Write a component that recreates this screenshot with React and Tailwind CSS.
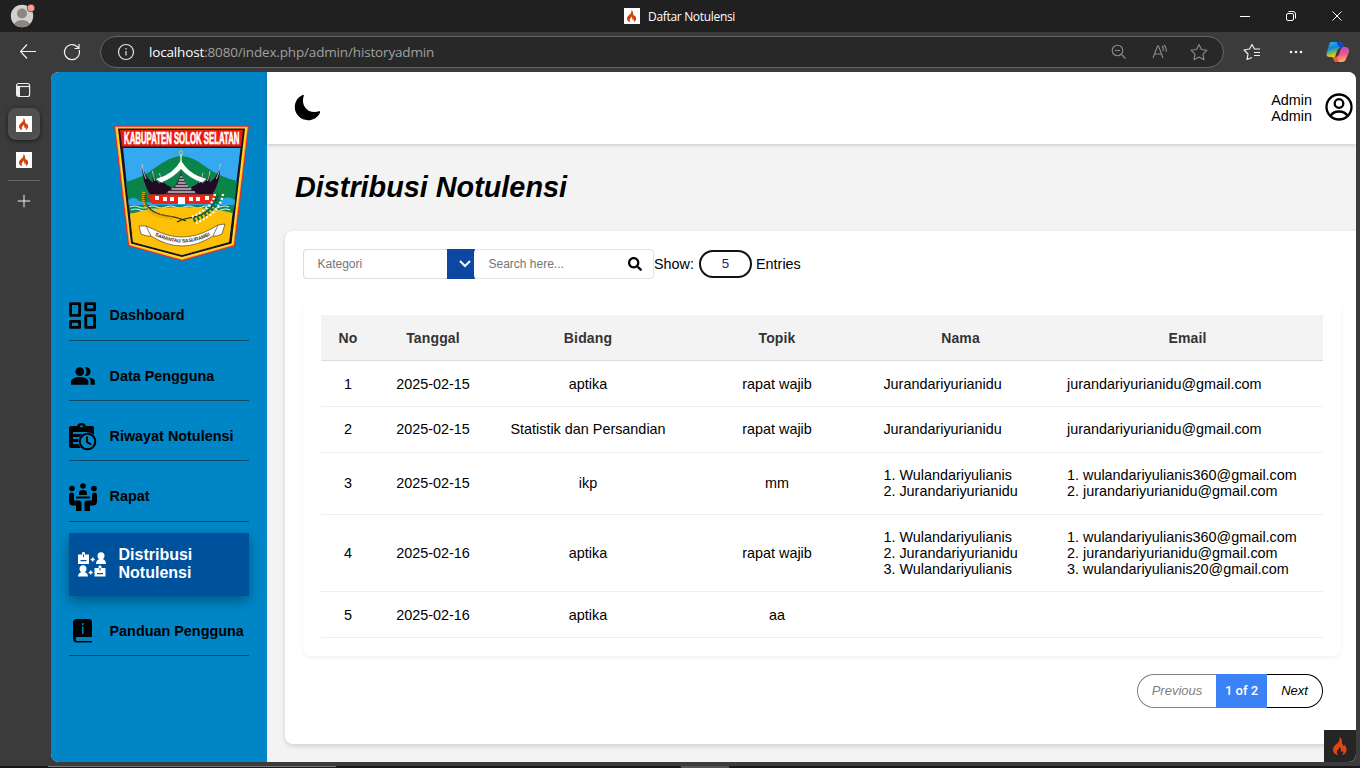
import { MdPeopleAlt } from "react-icons/md";
import { FaSearch } from "react-icons/fa";
import { IoMoon } from "react-icons/io5";
import { Plus } from "lucide-react";

function Flame({ height }) {
  return (
    <svg className="shrink-0" width={(height * 14) / 19} height={height} viewBox="0 0 14 19" fill="currentColor">
      <path d="M6.500 0C10 2 9 5 9.500 7L11 9.500L12 8C13 10 14 11 14 13C14 16 12 18 9 18.700C11 17 11 15 9.800 14.500C9 15.500 8 15 8 14C8.500 12 7.500 11 6.300 10C7 12.500 4 13 4 15.500C4 17 5 18 5.500 18.700C2 18 0 16 0 13C0 10 2 9 4 7C6.500 5 7 3 6.500 0Z" />
    </svg>
  );
}

function Horns() {
  return (
    <>
      <path d="M28 40Q32 56 43 59L47 69.500H36Q28 57 28 40ZM38.500 47Q41 58 50 61L52 69.500H43Q38 59 38.500 47ZM45.500 49Q49 60 57 62L56 69.500H49Q45 60 45.500 49Z" fill="#210b24" />
      <path d="M28 39Q29 48 32 54M38.500 46Q39 52 41 56M45.500 48Q46 54 49 58" fill="none" stroke="#e7e0e7" strokeWidth="0.800" />
    </>
  );
}

function Crest() {
  return (
    <svg width="136" height="138" viewBox="0 0 136 138" className="overflow-visible">
      <path d="M0 1H135L121 121L68 136L14 121Z" fill="#e8291c" />
      <path d="M1.500 2H133.500L119.500 120L68 134.500L15.500 120Z" fill="#ffd91a" stroke="#f0b080" strokeWidth="0.600" />
      <path d="M4 3.500H131L117.500 118.500L68 132L17 118.500Z" fill="#1d1020" />
      <path d="M6 5H129L127 21.500H8Z" fill="#e91d0f" />
      <path d="M9 23H126.500L115 117L68 130L19 117Z" fill="#35a9f0" />
      <path d="M12 57Q30 52 42 42Q58 31 67 31Q78 31 92 42Q106 52 123 56L120 82H15Z" fill="#0a8449" />
      <path d="M14.500 75Q20 70 25 76Q50 80 105 78Q111 69 121 75L120 83H15Z" fill="#2ba3e7" />
      <path d="M15 80H120.500L119 88H16Z" fill="#14845b" />
      <path d="M16 82q5 -2 9 0t9 0t9 0t9 0t9 0t9 0t9 0t9 0t9 0t9 0t9 0M17 85q5 -2 9 0t9 0t9 0t9 0t9 0t9 0t9 0t9 0t9 0t9 0t9 0" fill="none" stroke="#d9efdf" strokeWidth="1.200" />
      <path d="M16 89Q40 82 68 82Q100 83 118.500 88L115 117L68 130L19 117Z" fill="#fdc007" />
      <Horns />
      <g transform="translate(134.400 0) scale(-1 1)"><Horns /></g>
      <path d="M42 54Q60 49 67 35Q74 49 92.500 54L88 57.500Q75 53 67 44Q59 53 47 57.500Z" fill="#fff" />
      <path d="M67 46Q64 61 53 67L49 70.500H86L81 67Q70 61 67 46Z" fill="#443046" />
      <path d="M66 52H68.500M65 55H70M64 58H71.500M61.500 61H74M58 64H77M54 67H81" stroke="#fff" strokeWidth="1" />
      <path d="M33 69.500H102L97 79H38Z" fill="#ee2414" />
      <path d="M41 71h4v4h-4zM49 72h4v4h-4zM56 72h4v4h-4zM75 72h4v4h-4zM82 72h4v4h-4zM91 71h4v4h-4zM64 72h7v7h-7z" fill="#fff" />
      <path d="M67 29V38" stroke="#fff" strokeWidth="1.200" />
      <circle cx="67" cy="27.500" r="1.800" fill="none" stroke="#d6cc20" strokeWidth="1" />
      <path d="M31 69Q28 89 60 92Q68 94 72 96M104 70Q98 90 75 93Q68 94 63 97" fill="none" stroke="#17251f" strokeWidth="1.200" />
      <path d="M30 67Q27 80 38 88Q47 92 58 93" fill="none" stroke="#d9a012" strokeWidth="3.500" strokeDasharray="1 1" />
      <path d="M105 69Q101 87 78 95" fill="none" stroke="#117644" strokeWidth="6" strokeDasharray="2 2" />
      <path d="M109 69Q106 88 82 98M101 69Q98 84 77 92" fill="none" stroke="#f5faf0" strokeWidth="2.400" strokeDasharray="2 2" />
      <path d="M25 101L32 101L39 104Q68 120 97 104L104 100L111 99L108 109L103 111L99 111Q68 131 37 111L33 111L27 109Z" fill="#fff" stroke="#574323" strokeWidth="0.700" />
      <path d="M32 101L37 111M104 100L99 111" stroke="#574323" strokeWidth="0.700" />
      <path id="crest-ribbon" d="M38 109Q68.500 126 99 109" fill="none" />
      <text fontFamily="Liberation Sans" fontSize="5" letterSpacing="-0.100" fontWeight="bold" fill="#332b1d">
        <textPath href="#crest-ribbon" startOffset="50%" textAnchor="middle">SARANTAU SASURAMBI</textPath>
      </text>
      <g transform="translate(10 18.500) scale(0.555 1)">
        <text textLength="208" lengthAdjust="spacingAndGlyphs" fontFamily="Liberation Sans" fontSize="16" fontWeight="bold" fill="#fff" stroke="#fff" strokeWidth="0.700">KABUPATEN SOLOK SELATAN</text>
      </g>
    </svg>
  );
}

function DashboardIcon() {
  return (
    <svg width="28" height="28" viewBox="0 0 28 28" fill="none" stroke="black" strokeWidth="2.800">
      <path d="M1.600 1.600H10.600V13.400H1.600ZM16.800 1.600H25.600V7.800H16.800ZM16.800 13.600H25.600V25.400H16.800ZM1.600 19.400H10.600V25.400H1.600Z" strokeLinejoin="round" />
    </svg>
  );
}

function HistoryIcon() {
  return (
    <svg width="28" height="28" viewBox="0 0 28 28">
      <path fillRule="evenodd" d="M2 3H8Q9 0 12.500 0T17 3H23Q25 3 25 5V13Q22 11 18 11V9H4V11H14L12 14H4V16H11L10 19H4V21H10Q11 24 13 25H2Q0 25 0 23V5Q0 3 2 3ZM12.500 2A1.300 1.300 0 1 0 12.600 2Z" />
      <circle cx="18.500" cy="18.500" r="9.300" className="fill-[#0086c7]" />
      <circle cx="18.500" cy="18.500" r="7.800" fill="none" stroke="black" strokeWidth="2" />
      <path d="M18 13.500V19L22 21.500" fill="none" stroke="black" strokeWidth="2" />
    </svg>
  );
}

function MeetingIcon() {
  return (
    <svg width="28" height="28" viewBox="0 0 28 28">
      <circle cx="14" cy="3" r="2.800" />
      <circle cx="3" cy="5.500" r="2.800" />
      <circle cx="25" cy="5.500" r="2.800" />
      <path d="M10 12V10Q10 7 14 7T18 10V12ZM7 13.500H21V15.500H7ZM0 12Q0 9.500 2.500 9.500T5 12V17.500H9.500Q12.500 17.500 12.500 20.500V28H7V22.500H4Q0 22.500 0 18ZM28 12Q28 9.500 25.500 9.500T23 12V17.500H18.500Q15.500 17.500 15.500 20.500V28H21V22.500H24Q28 22.500 28 18Z" />
    </svg>
  );
}

function DistributionIcon() {
  return (
    <svg width="28" height="26" viewBox="0 0 28 26" fill="currentColor">
      <path fillRule="evenodd" d="M0 2.500H4V1Q4 0 5.500 0T7 1V2.500H11V12H0ZM5 2.500V5H6V2.500ZM2.500 8H8.500V9.300H2.500Z" />
      <path fillRule="evenodd" transform="translate(16.500 13.500)" d="M0 2.500H4V1Q4 0 5.500 0T7 1V2.500H11V11H0ZM5 2.500V5H6V2.500ZM2.500 7.500H8.500V8.800H2.500Z" />
      <path d="M14.700 5.500V9.500M12.700 7.500H16.700M12.700 18.500V22.500M10.700 20.500H14.700" stroke="currentColor" strokeWidth="1.500" />
      <circle cx="23" cy="3.700" r="3.500" />
      <path d="M21.500 5H24.500V7Q28 8 28 12H18Q18 8 21.500 7Z" />
      <circle cx="5" cy="16.700" r="3.500" />
      <path d="M3.500 18H6.500V20Q10 21 10 24.500H0Q0 21 3.500 20Z" />
    </svg>
  );
}

function GuideIcon() {
  return (
    <svg width="20" height="24" viewBox="0 0 20 24">
      <path fillRule="evenodd" d="M4 0H16Q19 0 19 3V17Q19 18 18 18H4Q2.500 18 2.500 20T4 22H19V23.500H4Q0 23.500 0 19.500V4Q0 0 4 0ZM9 4V6H10.500V4ZM9 7.500V15H10.500V7.500Z" />
    </svg>
  );
}

const menu = [
  { label: "Dashboard", icon: <DashboardIcon />, cls: "h-[52px] pt-px" },
  { label: "Data Pengguna", icon: <MdPeopleAlt size={26} className="mb-[2px]" />, cls: "h-[60px] pt-[11px]" },
  { label: "Riwayat Notulensi", icon: <HistoryIcon />, cls: "h-[60px] pt-[11px]" },
  { label: "Rapat", icon: <MeetingIcon />, cls: "h-[61px] pt-[10px]" },
];

const Item = ({ label, icon, cls }) => (
  <div className={"flex items-center border-b border-[#084766] " + cls}>
    <span className="flex w-7 shrink-0 justify-center pt-px">{icon}</span>
    <span className="ml-[12.500px] text-[14.400px] leading-4 font-bold whitespace-nowrap">{label}</span>
  </div>
);

const W = "Wulandariyulianis";
const J = "Jurandariyurianidu";
const rows = [
  ["1", "2025-02-15", "aptika", "rapat wajib", [J], ["jurandariyurianidu@gmail.com"], "h-[46px]"],
  ["2", "2025-02-15", "Statistik dan Persandian", "rapat wajib", [J], ["jurandariyurianidu@gmail.com"], "h-[46px] pb-px"],
  ["3", "2025-02-15", "ikp", "mm", ["1. " + W, "2. " + J], ["1. wulandariyulianis360@gmail.com", "2. jurandariyurianidu@gmail.com"], "h-[62px] pb-px"],
  ["4", "2025-02-16", "aptika", "rapat wajib", ["1. " + W, "2. " + J, "3. " + W], ["1. wulandariyulianis360@gmail.com", "2. jurandariyurianidu@gmail.com", "3. wulandariyulianis20@gmail.com"], "h-[77px]"],
  ["5", "2025-02-16", "aptika", "aa", [], [], "h-[46px]"],
];
const grid = "grid grid-cols-[54px_116px_194px_184px_183px_271px] items-center border-b";

function TitleBar() {
  return (
    <header className="flex h-8 shrink-0 items-center bg-[#202020] text-white">
      <div className="flex w-[624px] pl-[10px]">
        <svg width="26" height="26" viewBox="0 0 26 26">
          <clipPath id="avatar"><circle cx="12" cy="13" r="11.200" /></clipPath>
          <g clipPath="url(#avatar)">
            <rect width="26" height="26" fill="#d3d0cd" />
            <circle cx="12" cy="10.500" r="5" fill="#8b8783" />
            <ellipse cx="12" cy="22.500" rx="8" ry="5.500" fill="#8b8783" />
          </g>
          <circle cx="21" cy="5" r="3.800" fill="#ff9a94" stroke="#202020" strokeWidth="0.600" />
        </svg>
      </div>
      <Favicon />
      <span className="ml-2 w-[592px] pt-px font-['Open_Sans'] text-[12px] tracking-[-0.320px]">Daftar Notulensi</span>
      <svg width="104" height="16" viewBox="0 0 104 16" fill="none" stroke="white" strokeWidth="1">
        <path d="M0 8.500H10" />
        <rect x="46.500" y="5.500" width="7" height="7" rx="1.500" />
        <path d="M48.500 3.500H53Q55.500 3.500 55.500 6V10.500M92.500 3.500L101.500 12.500M101.500 3.500L92.500 12.500" />
      </svg>
    </header>
  );
}

function Favicon() {
  return (
    <span className="flex size-4 shrink-0 items-center justify-center bg-white text-[#cc4410]">
      <Flame height={12.5} />
    </span>
  );
}

function AddressBar() {
  return (
    <div className="flex h-10 shrink-0 items-center bg-[#3b3b3b] text-[#f1f1f1]">
      <svg className="ml-5 shrink-0" width="80" height="20" viewBox="0 0 80 20" fill="none" stroke="currentColor" strokeWidth="1.200">
        <path d="M16 9.500H0.500M7 2.500L0.500 9.500L7 16.500" />
        <path d="M59.200 8A7.500 7.500 0 1 1 57 4.500L59 6.500M59 2V6.500H54.500" />
      </svg>
      <div className="flex h-8 w-[1124px] shrink-0 items-center rounded-full border border-[#666] bg-[#282828] pl-4">
        <svg className="shrink-0" width="18" height="18" viewBox="0 0 18 18" fill="none" stroke="#e4e4e4" strokeWidth="1.200">
          <circle cx="9" cy="9" r="7.500" /><path d="M9 8V12.500M9 5V6.500" />
        </svg>
        <span className="ml-[14px] w-[962px] shrink-0 pt-px font-['Open_Sans'] text-[13.500px] tracking-[-0.160px] text-[#a0a0a0]"><span className="text-white">localhost</span>:8080/index.php/admin/historyadmin</span>
        <svg className="shrink-0" width="98" height="20" viewBox="0 0 98 20" fill="none" stroke="#8c8c8c" strokeWidth="1.100">
          <circle cx="6.500" cy="8.500" r="5.300" /><path d="M4 8.500H9M10.500 12.500L14.500 16.500M42 16L46.500 4H47.500L52 16M43.500 12H50.500M51 4Q53 6 52 9M53 3Q56 6 55 10" />
          <path d="M88 2.500L90.400 7.500L96 8.200L92 12.100L93 17.700L88 15L83 17.700L84 12.100L80 8.200L85.600 7.500Z" strokeLinejoin="round" />
        </svg>
      </div>
      <svg className="ml-[19px] shrink-0" width="117" height="24" viewBox="0 0 117 24" fill="none" stroke="currentColor" strokeWidth="1.200">
        <path d="M9 17.500L4 19.500L5 14L1 10L6.500 9L9 4.500L11.500 9H17M11 12.500H17M11 15.500H17" strokeLinejoin="round" />
        <g fill="currentColor" stroke="none"><circle cx="48" cy="12" r="1.300" /><circle cx="53" cy="12" r="1.300" /><circle cx="58" cy="12" r="1.300" /></g>
        <defs>
          <linearGradient id="cool" x2="0.300" y2="1"><stop stopColor="#28b8f5" /><stop offset=".45" stopColor="#1582dc" /><stop offset=".7" stopColor="#65b764" /><stop offset="1" stopColor="#f5c728" /></linearGradient>
          <linearGradient id="warm" x2="0.200" y2="1"><stop stopColor="#9853ee" /><stop offset=".55" stopColor="#f05286" /><stop offset="1" stopColor="#ffab62" /></linearGradient>
        </defs>
        <g stroke="none" transform="translate(-1 0)">
          <path d="M89 2H97Q100 2 101 5L102 8H98Q96 8 95 11L93 17H88Q83 17 85 12L87 5Q87.500 2 89 2Z" fill="url(#cool)" />
          <path d="M95 2H98Q100 2 101 5L102 8H98L95 4Z" fill="#1747c7" />
          <path d="M102 7H104Q108 8 107 12L104 19Q103 22 100 22H95Q92 22 91 17H94Q96 17 97 14L99 9Q100 7 102 7Z" fill="url(#warm)" />
          <path d="M89 17H95L97 22H95Q92 22 91 18Z" fill="#f45934" />
        </g>
      </svg>
    </div>
  );
}

export default function App() {
  return (
    <div className="flex h-[768px] w-[1360px] flex-col overflow-hidden bg-[#3b3b3b] font-['Liberation_Sans',sans-serif] text-black">
      <TitleBar />
      <AddressBar />
      <div className="flex h-[690px] shrink-0">
        <aside className="flex w-[51px] shrink-0 flex-col items-center pr-[3px] text-white">
          <svg className="mt-[10px]" width="16" height="16" viewBox="0 0 16 16" fill="none" stroke="#eee" strokeWidth="1.200">
            <rect x="0.600" y="1.500" width="13" height="13" rx="2" /><path d="M1 4.500H14" /><path d="M2.500 4.500V14" strokeWidth="3" />
          </svg>
          <span className="mt-[10px] flex size-8 items-center justify-center rounded-lg bg-[#505050] shadow-[0_1px_4px_#1b1b1b]"><Favicon /></span>
          <span className="mt-3"><Favicon /></span>
          <span className="mt-3 h-px w-8 bg-[#666]" />
          <Plus className="mt-[10px] -ml-px" size={20} strokeWidth={1.100} />
        </aside>
        <div className="flex w-[1305px] overflow-hidden rounded-lg bg-[#f3f3f3]">
          <nav className="flex w-[216px] shrink-0 flex-col bg-[#0086c7] px-[18px] pt-[53px]">
            <div className="ml-[45px] w-[136px]"><Crest /></div>
            <div className="mt-[26px] flex flex-col">
              {menu.map((m) => <Item key={m.label} {...m} />)}
            </div>
            <div className="mt-[11px] flex h-[63px] shrink-0 items-center bg-[#00519b] pl-[9px] text-white shadow-[0_5px_12px_rgba(0,0,0,0.350)]">
              <DistributionIcon />
              <span className="ml-[12.500px] pb-px text-[16px] leading-[18px] font-bold">Distribusi<br />Notulensi</span>
            </div>
            <Item label="Panduan Pengguna" icon={<GuideIcon />} cls="h-[60px] pt-[10px] shrink-0" />
          </nav>
          <main className="flex w-[1089px] flex-col">
            <div className="flex h-[72px] shrink-0 items-center justify-between bg-white pr-[3px] pl-[26px] shadow-[0_1px_4px_rgba(0,0,0,0.200)]">
              <IoMoon size={29} className="mb-px" />
              <div className="flex items-center">
                <span className="text-[14.400px] leading-4">Admin<br />Admin</span>
                <svg className="mb-[2px] ml-[13px]" width="28" height="28" viewBox="0 0 28 28" fill="none" stroke="black" strokeWidth="2.300">
                  <circle cx="14" cy="14" r="12.500" /><circle cx="14" cy="10.500" r="4.300" /><path d="M5.500 23Q8 18.500 14 18.500T22.500 23" />
                </svg>
              </div>
            </div>
            <h1 className="mt-[25px] ml-[28px] h-9 text-[28.800px] leading-9 font-bold italic">Distribusi Notulensi</h1>
            <section className="mt-[26px] ml-[18px] flex h-[513px] w-[1080px] shrink-0 flex-col rounded-lg bg-white pt-[18px] pl-[18px] shadow-[0_2px_5px_rgba(0,0,0,0.150)]">
              <div className="flex h-[30px] items-center text-[14.400px]">
                <div className="flex h-[30px] w-[144px] items-center rounded-l border border-r-0 border-[#ddd] pl-[13.500px] text-[12px] text-[#757575]">Kategori</div>
                <div className="flex h-[30px] w-[28px] items-center justify-end bg-[#0d47a1] pr-1">
                  <svg width="12" height="8" viewBox="0 0 12 8" fill="none" stroke="white" strokeWidth="2"><path d="M1 1L6 6L11 1" /></svg>
                </div>
                <div className="-ml-px flex h-[30px] w-[180px] items-center justify-between rounded border border-l-0 border-[#e3e3e3] bg-white pr-[11px] pl-[14.500px] text-[12px] text-[#757575]">Search here...<FaSearch size={14} color="black" /></div>
                <span className="pt-[2px]">Show:</span>
                <span className="ml-[5px] flex h-7 w-[53px] items-center justify-center rounded-full border-2 border-[#111] pb-px text-[13.330px] text-[#222266]">5</span>
                <span className="ml-1 pt-[2px]">Entries</span>
              </div>
              <div className="mt-[18px] flex h-[359px] w-[1038px] flex-col rounded-lg px-[18px] pt-[18px] shadow-[0_2px_4px_rgba(0,0,0,0.050)]">
                <div className={grid + " h-[46px] border-[#ddd] bg-[#f3f3f3] text-center text-[14px] leading-4 font-bold tracking-[0.150px] text-[#333]"}>
                  {["No", "Tanggal", "Bidang", "Topik", "Nama", "Email"].map((h) => <span key={h}>{h}</span>)}
                </div>
                {rows.map((r) => (
                  <div key={r[0]} className={grid + " border-[#eee] text-center text-[14.400px] leading-4 " + r[6]}>
                    {r.slice(0, 4).map((c, i) => <span key={i}>{c}</span>)}
                    <span className="pl-[14.400px] text-left">{r[4].map((t, i) => <div key={i}>{t}</div>)}</span>
                    <span className="pl-[15px] text-left">{r[5].map((t) => <div key={t}>{t}</div>)}</span>
                  </div>
                ))}
              </div>
              <div className="mt-[18px] mr-[42px] flex h-[34px] w-[186px] self-end text-[13px]">
                <span className="flex w-[79px] items-center justify-center rounded-l-full border border-r-0 border-[#808080] text-[#808080] italic">Previous</span>
                <span className="flex w-[51px] items-center justify-center bg-[#3b82f6] font-[Roboto] text-[13px] font-medium text-white">1 of 2</span>
                <span className="flex w-[56px] items-center justify-center rounded-r-full border border-l-0 border-black italic">Next</span>
              </div>
            </section>
          </main>
          <div className="absolute top-[730px] left-[1324px] flex size-8 items-center justify-center rounded-br-lg bg-[#252525] text-[#dd4814]"><Flame height={18.5} /></div>
        </div>
      </div>
      <div className="mt-auto flex h-[2px] bg-[#181818]">
        <div className="ml-12 h-px w-72 bg-[#777]" />
        <div className="ml-[345px] h-[2px] w-12 bg-[#555]" />
      </div>
    </div>
  );
}
